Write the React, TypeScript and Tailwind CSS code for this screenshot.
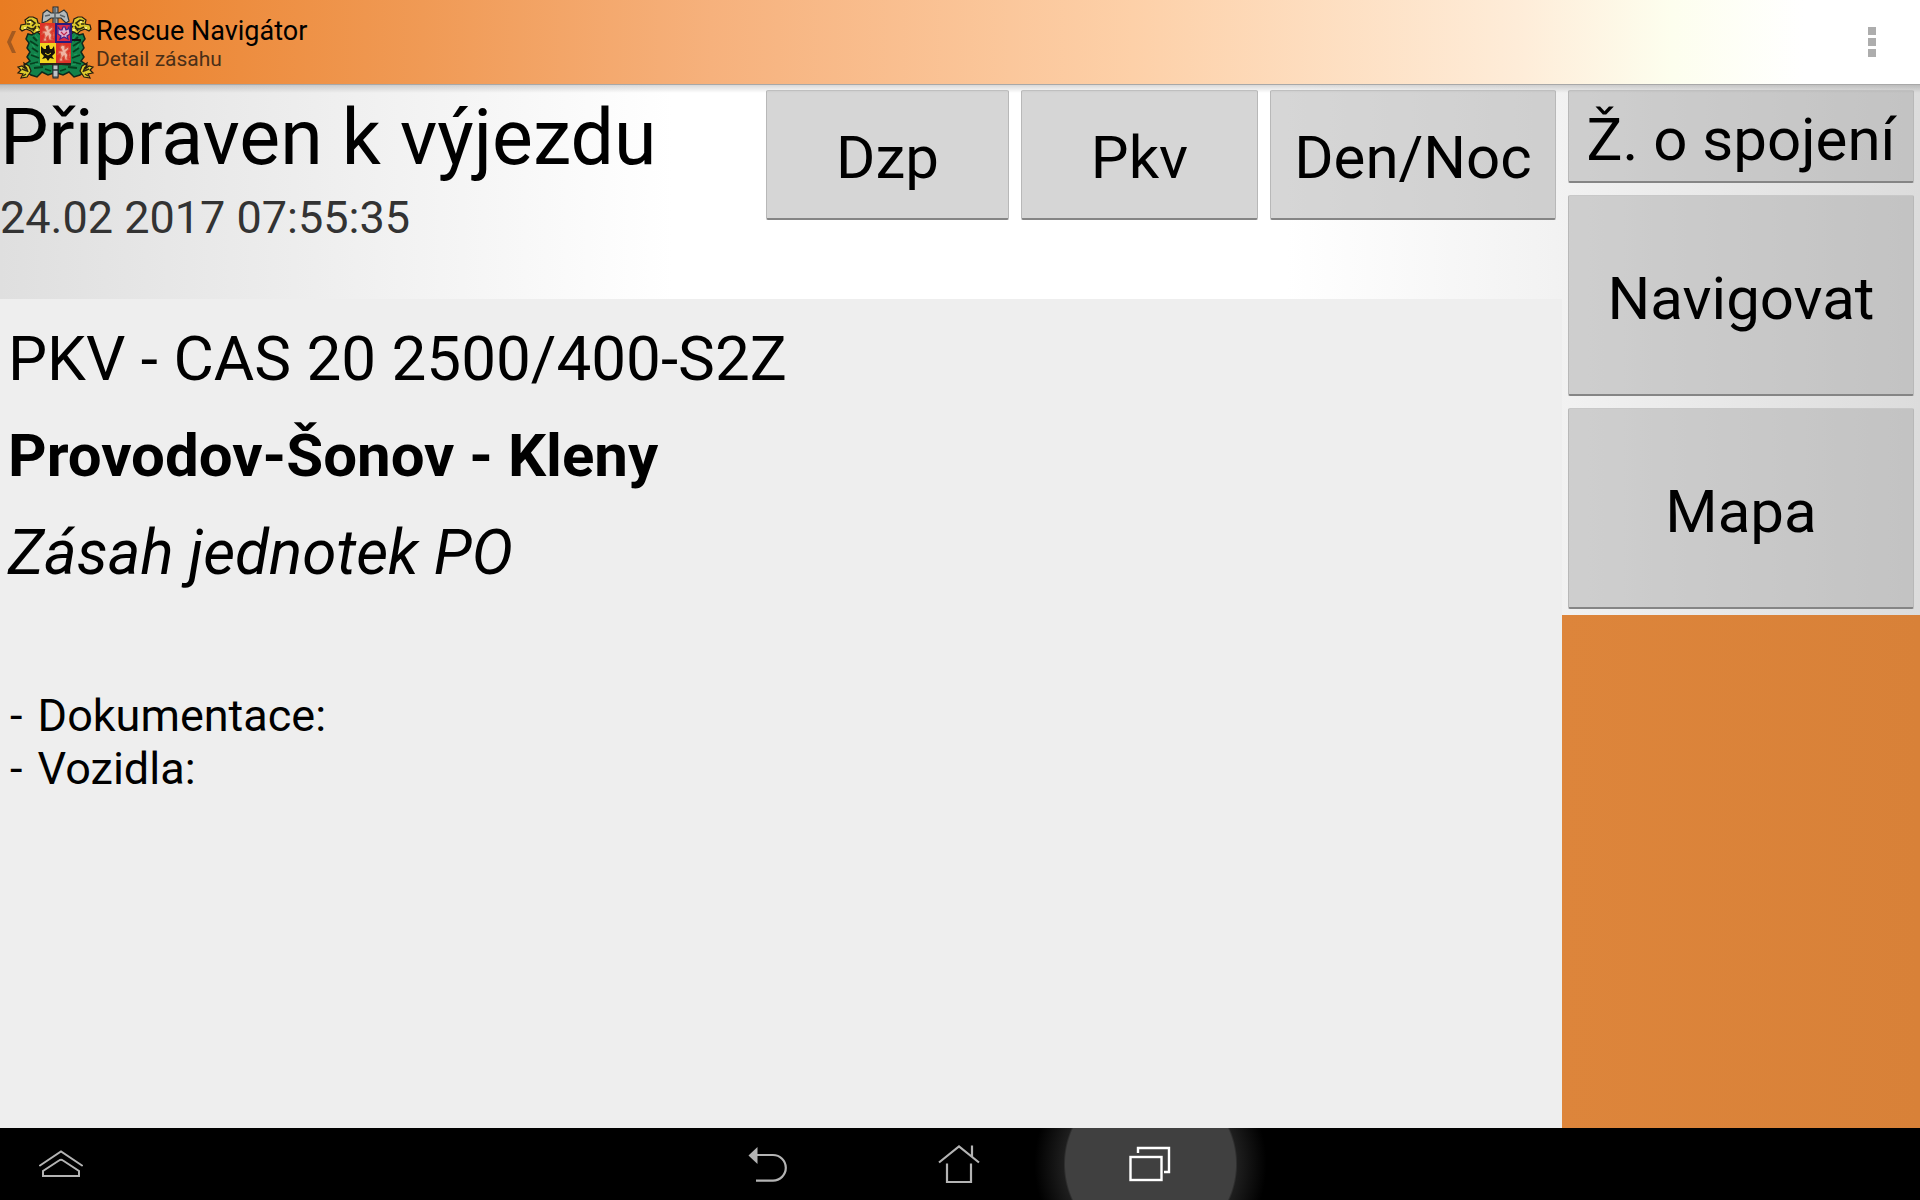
import React from 'react';

const ROWS = [
  { text: 'PKV - CAS 20 2500/400-S2Z', style: 'text-[62px]' },
  { text: 'Provodov-Šonov - Kleny', style: 'text-[60px] font-bold' },
  { text: 'Zásah jednotek PO', style: 'text-[62px] italic' },
];

const SECTIONS = ['Dokumentace:', 'Vozidla:'];

const Lion: React.FC<{ x: number; y: number }> = ({ x, y }) => (
  <path
    transform={`translate(${x} ${y})`}
    d="M3 3 L5 1 L8 2 L8 5 L11 3 L12 5 L9 8 L11 11 L10 14 L12 16 L8 16 L7 12 L5 14 L6 17 L2 17 L4 12 L3 9 L1 10 L2 7 L5 7 Z M12 8 L13 11 L12 14"
    fill="#efb5a2"
    stroke="#d8553f"
    strokeWidth="1.2"
  />
);

const Emblem: React.FC = () => (
  <svg width="80" height="80" viewBox="15 1 80 80" aria-hidden="true">
    {/* acanthus leaves, left side is mirrored to the right */}
    {[false, true].map(flip => (
      <g key={String(flip)} transform={flip ? 'translate(109 0) scale(-1 1)' : undefined}>
        <path
          d="M35 30 L40 34 V64 L52 63 L53 72 L47 74 L41 71 L36 76 L30 74 L25 70 L23 64 L29 60 L26 56 L29 51 L26 47 L28 42 L25 38 L27 33 L31 34 Z"
          fill="#12824a"
          stroke="#10281c"
          strokeWidth="1.5"
        />
        <path d="M32 36 L36 40 M29 40 L37 45 M31 47 L37 51 M30 54 L38 57 M29 63 L37 61 M33 67 L42 66 M44 68 L50 70" stroke="#06401f" strokeWidth="1.8" fill="none" />
        <path d="M34 34 L37 38 M31 43 L34 47 M33 53 L36 54 M34 63 L39 64" stroke="#1f9c5c" strokeWidth="1.2" fill="none" />
        <path
          d="M24 19 L28 16 L32 16 L36 18 L37 22 L41 23 L39 27 L40 30 L36 31 L33 33 L30 30 L25 28 L21 30 L19 28 L20 24 L25 23 Z"
          fill="#dcc92c"
          stroke="#241c10"
          strokeWidth="1.2"
        />
        <path d="M26 20 L30 19 L34 22 L31 25 M26 26 L30 28 L35 27 M37 25 L39 27 M29 23 L26 23 M32 30 L35 25" stroke="#302a10" strokeWidth="1.6" fill="none" />
        <path d="M28 21 h2 M35 29 h2 M23 27 h2" stroke="#fff7a0" strokeWidth="1.4" />
        <path
          d="M17 66 L21 65 L25 68 L23 62 L28 65 L30 70 L26 76 L20 77 L22 73 L17 72 L20 69 Z"
          fill="#dcc92c"
          stroke="#241c10"
          strokeWidth="1.2"
        />
        <path d="M21 68 L26 70 M22 75 L25 73 M25 66 L27 71" stroke="#302a10" strokeWidth="1.4" />
      </g>
    ))}

    {/* axe */}
    <rect x="52" y="6" width="5" height="71" fill="#9aa0a3" stroke="#22272a" strokeWidth="1" />
    <path
      d="M42 12 L46 9 L50 12 H58 L63 9 L66 12 L68 20 L65 22 L60 17 H50 L46 20 L41 22 Z"
      fill="#b4babc"
      stroke="#2d3437"
      strokeWidth="1.2"
    />
    <path d="M54 6 V22 M44 15 L49 14 M59 14 L64 16" stroke="#5c6468" strokeWidth="1.6" />

    {/* shield */}
    <rect x="39" y="22" width="16" height="20" fill="#de3328" />
    <rect x="39" y="42" width="16" height="20" fill="#f2d51f" />
    <rect x="55" y="42" width="15" height="20" fill="#de3328" />
    <rect x="55" y="23" width="15" height="18" fill="#d92b4a" stroke="#2a1a7c" strokeWidth="2" />
    <Lion x={40} y={23} />
    <Lion x={56} y={43} />
    <path
      d="M57 26 L59 29 L61 29 L62 26 L64 26 L65 29 L67 28 L68 26 L69 33 L66 35 L67 38 L63 36 L59 38 L60 35 L57 33 Z"
      fill="#e0b0cc"
      stroke="#41228a"
      strokeWidth="1.2"
    />
    <path d="M60 31 L63 34 L66 31" stroke="#c0284e" strokeWidth="1.2" fill="none" />
    <path
      d="M40 45 L43 48 L45 48 L45 45 L48 44 L49 48 L51 48 L53 45 L54 52 L51 55 L53 58 L49 57 L47 60 L45 57 L41 58 L43 55 L40 52 Z"
      fill="#16120a"
    />
    <path d="M44 52 L47 54 L50 52" stroke="#f2d51f" strokeWidth="1" fill="none" />
    <path d="M39 62 H70 V64 H57 L55 66 L53 64 H39 Z" fill="#2b2018" />
    <path d="M71 39 h9" stroke="#151515" strokeWidth="2" />
    <path d="M52 64 h5 v12 h-5 z" fill="#bfc3c6" stroke="#2d3437" strokeWidth="1" />
    <path d="M52 69 h5" stroke="#2d3437" strokeWidth="1.5" />
  </svg>
);

interface PanelButtonProps {
  label: string;
  className: string;
}

const PanelButton: React.FC<PanelButtonProps> = ({ label, className }) => (
  <button
    className={`flex items-center justify-center rounded-xs bg-[#a4a4a4]/45 pt-[7px] text-[60px] leading-[70px] whitespace-nowrap border border-t-[#c8c8c8] border-x-[#b8b8b8] border-b-2 border-b-[#858585] ${className}`}
  >
    {label}
  </button>
);

const App: React.FC = () => {
  return (
    <div className="flex min-h-screen flex-col bg-[#eeeeee] font-[Roboto,sans-serif] text-black">
      <header className="flex h-[85px] items-center justify-between border-b border-[#a8a8a8] bg-[linear-gradient(90deg,#e97c22_0%,#f09a55_22%,#f6b17c_37%,#fdd0a8_59%,#feecd8_79%,#fdfeee_87%,#ffffff_94%)]">
        <button className="flex h-full items-center text-left" aria-label="Zpět">
          <svg width="12" height="24" viewBox="0 0 12 24" className="ml-1" aria-hidden="true">
            <path d="M8 1 H12 L7 12 L12 23 H8 L3 12 Z" fill="#a45a20" />
          </svg>
          <Emblem />
          <span className="block pt-[3px]">
            <span className="block text-[27px] leading-8">Rescue Navigátor</span>
            <span className="block text-[21px] leading-[25px] text-[#4a2f18]">Detail zásahu</span>
          </span>
        </button>
        <button className="flex h-full w-24 flex-col items-center justify-center gap-[3px]" aria-label="Další možnosti">
          <span className="size-2 bg-[#adadad]" />
          <span className="size-2 bg-[#adadad]" />
          <span className="size-2 bg-[#adadad]" />
        </button>
      </header>

      <main className="relative flex flex-1 bg-[linear-gradient(90deg,#dfdfdf_0%,#ffffff_35%,#ffffff_67%,#f2f2f2_81%,#dcdcdc_100%)]">
        <div className="pointer-events-none absolute inset-x-0 top-0 h-2 bg-linear-to-b from-black/15 to-transparent" />

        <div className="flex flex-1 flex-col">
          <section className="flex h-[214px] items-start justify-between">
            <div className="pt-2">
              <h1 className="text-[77px] leading-[90px]">Připraven k výjezdu</h1>
              <p className="mt-2 text-[45px] leading-[53px] text-[#333333]">24.02 2017 07:55:35</p>
            </div>
            <div className="flex gap-3 pt-[5px] pr-[6px]">
              <PanelButton label="Dzp" className="h-[130px] w-[243px]" />
              <PanelButton label="Pkv" className="h-[130px] w-[237px]" />
              <PanelButton label="Den/Noc" className="h-[130px] w-[286px]" />
            </div>
          </section>

          <section className="flex-1 bg-[#eeeeee] px-2 pt-[11px]">
            {ROWS.map(row => (
              <p key={row.text} className={`leading-[97px] ${row.style}`}>{row.text}</p>
            ))}
            <ul className="mt-[88px] pl-[2px] text-[45px] leading-[53px]">
              {SECTIONS.map(name => (
                <li key={name}><span className="mr-1">-</span> {name}</li>
              ))}
            </ul>
          </section>
        </div>

        <aside className="flex w-[358px] flex-col">
          <div className="flex flex-col gap-3 px-[6px] pt-[5px] pb-[6px]">
            <PanelButton label="Ž. o spojení" className="h-[93px]" />
            <PanelButton label="Navigovat" className="h-[201px]" />
            <PanelButton label="Mapa" className="h-[201px]" />
          </div>
          <div className="flex-1 bg-linear-to-r from-[#dd853b] to-[#d88138]" />
        </aside>
      </main>

      <nav className="flex h-[72px] overflow-hidden bg-black pr-[2px] text-[#b4b4b4]">
        <div className="flex flex-1 items-center">
          <button className="flex h-full w-[122px] items-center justify-center" aria-label="Nahoru">
            <svg width="44" height="28" viewBox="0 0 44 28" fill="none" stroke="currentColor" strokeWidth="2" strokeLinecap="round" aria-hidden="true">
              <path d="M1 15.500 L22 1.500 L43 15.500" />
              <path d="M4 26 V21 L20 10.500 Q22 9 24 10.500 L40 21 V26 Z" />
            </svg>
          </button>
        </div>
        <button className="flex w-[191px] items-center justify-center" aria-label="Zpět">
          <svg width="40" height="38" viewBox="0 0 40 38" fill="none" aria-hidden="true">
            <path d="M8 10 H25 A12.800 12.800 0 0 1 25 35.600 H8" stroke="currentColor" strokeWidth="2.200" />
            <path d="M0.500 10.500 L9.500 2 V19 Z" fill="currentColor" />
          </svg>
        </button>
        <button className="flex w-[191px] items-center justify-center" aria-label="Domů">
          <svg width="42" height="40" viewBox="0 0 42 40" fill="none" stroke="currentColor" strokeWidth="2.200" aria-hidden="true">
            <path d="M1 18.500 L21 2.500 L41 18.500 M34 1.500 V13" />
            <path d="M9 19.500 V38 H33 V19.500" />
          </svg>
        </button>
        <button className="relative flex w-[191px] items-center justify-center text-white" aria-label="Poslední aplikace">
          <span className="absolute inset-y-0 -inset-x-6 bg-[radial-gradient(circle_at_center,#404040_85px,#1e1e1e_87px,#000000_116px)]" />
          <svg width="42" height="36" viewBox="0 0 42 36" fill="none" stroke="currentColor" strokeWidth="2.400" className="relative" aria-hidden="true">
            <path d="M9 7 V2 H40 V26 H35" />
            <rect x="1.500" y="11" width="31" height="23" />
          </svg>
        </button>
        <div className="flex-1" />
      </nav>
    </div>
  );
};

export default App;
